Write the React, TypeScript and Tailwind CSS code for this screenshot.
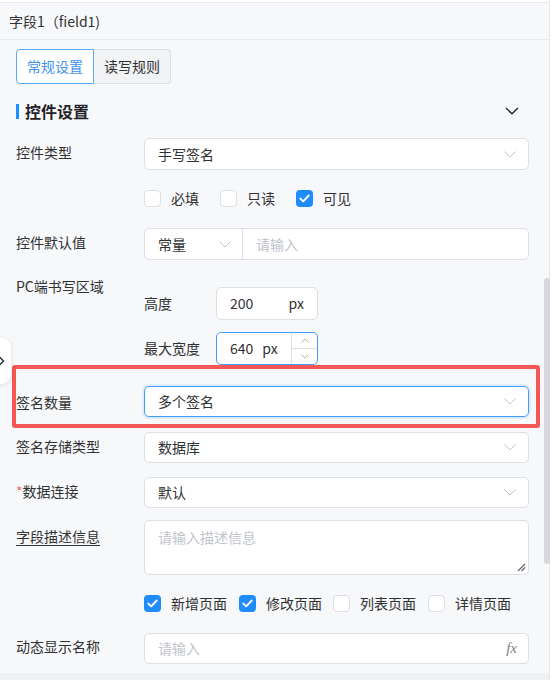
import React from "react";

const font = "font-['Noto_Sans_CJK_SC','Noto_Sans',sans-serif]";

function Chevron({ className = "" }: { className?: string }) {
  return (
    <svg width="12" height="7" viewBox="0 0 12 7" fill="none" className={className}>
      <path d="M0.5 0.5L6 6L11.5 0.5" stroke="currentColor" strokeWidth="1" />
    </svg>
  );
}

function Select({ value, focused = false, tall = false }: { value: string; focused?: boolean; tall?: boolean }) {
  const base =
    "flex w-[385px] items-center justify-between rounded-[5px] border bg-white pl-[13px] pr-[12px] text-[14px] text-[#303133]";
  return (
    <div
      className={`${base} ${tall ? "h-[32px]" : "h-[31px]"} ${
        focused ? "border-[#409eff] shadow-[0_0_0_2px_rgba(64,158,255,0.12)]" : "border-[#dcdfe6]"
      }`}
    >
      <span>{value}</span>
      <Chevron className="text-[#c0c4cc]" />
    </div>
  );
}

function Box({ checked, label, className = "" }: { checked: boolean; label: string; className?: string }) {
  return (
    <div className={`flex items-center ${className}`}>
      {checked ? (
        <span className="flex h-[17px] w-[17px] items-center justify-center rounded-[4px] bg-[#1e8cfa]">
          <svg width="11" height="9" viewBox="0 0 11 9" fill="none">
            <path d="M1.3 4.6L4.2 7.3L9.7 1.5" stroke="white" strokeWidth="1.9" strokeLinecap="round" strokeLinejoin="round" />
          </svg>
        </span>
      ) : (
        <span className="h-[17px] w-[17px] rounded-[4px] border border-[#dcdfe6] bg-white" />
      )}
      <span className="ml-[10px] text-[14px] leading-[22px] text-[#303133]">{label}</span>
    </div>
  );
}

function Label({ children, className = "" }: { children: React.ReactNode; className?: string }) {
  return <div className={`w-[128px] shrink-0 text-[14px] leading-[22px] text-[#303133] ${className}`}>{children}</div>;
}

export default function App() {
  return (
    <div className={`relative h-[680px] w-[554px] overflow-hidden bg-white ${font}`}>
      <div className="w-[550px] border-r border-[#e6e8eb] bg-[#f7f8fa]">
        <div className="h-[2px] bg-white" />
        {/* panel title */}
        <div className="flex h-[38px] items-center border-y border-[#e8eaee] pl-[9px] text-[14px] text-[#303133]">
          字段1（field1)
        </div>

        <div className="flex flex-col pb-[9px] pl-4">
          {/* tabs */}
          <div className="mt-[9px] flex h-[35px] text-[14px]">
            <div className="flex w-[78px] items-center justify-center rounded-l-[4px] border border-[#5aa8fa] bg-white text-[#3f92ee]">
              常规设置
            </div>
            <div className="flex w-[77px] items-center justify-center rounded-r-[4px] border border-l-0 border-[#dcdfe6] bg-[#f2f3f5] text-[#303133]">
              读写规则
            </div>
          </div>

          {/* section heading */}
          <div className="mt-[16px] flex h-[22px] items-center pr-[30px]">
            <span className="h-[15px] w-[3px] bg-[#1890ff]" />
            <span className="ml-[6px] text-[16px] font-bold text-[#1f2329]">控件设置</span>
            <svg width="14" height="8" viewBox="0 0 14 8" fill="none" className="ml-auto text-[#1f2329]">
              <path d="M1 1L7 6.8L13 1" stroke="currentColor" strokeWidth="1.4" />
            </svg>
          </div>

          {/* control type */}
          <div className="mt-[16px] flex">
            <Label className="pt-[3px]">控件类型</Label>
            <Select value="手写签名" tall />
          </div>

          <div className="mt-[17px] flex pl-[128px]">
            <Box checked={false} label="必填" />
            <Box checked={false} label="只读" className="ml-[21px]" />
            <Box checked label="可见" className="ml-[21px]" />
          </div>

          {/* default value */}
          <div className="mt-[19px] flex">
            <Label className="pt-[3px]">控件默认值</Label>
            <div className="flex h-[32px] w-[385px] rounded-[5px] border border-[#dcdfe6] bg-white text-[14px]">
              <div className="flex w-[98px] items-center justify-between border-r border-[#dcdfe6] pl-[13px] pr-[11px] text-[#303133]">
                <span>常量</span>
                <Chevron className="text-[#c0c4cc]" />
              </div>
              <div className="flex items-center pl-[13px] text-[#c0c4cc]">请输入</div>
            </div>
          </div>

          {/* PC writing area */}
          <div className="mt-[15px] flex">
            <Label>PC端书写区域</Label>
            <div className="mt-[12px] flex flex-col gap-[12px]">
              <div className="flex items-center">
                <span className="w-[72px] text-[14px] text-[#303133]">高度</span>
                <div className="flex h-[33px] w-[102px] items-center justify-between rounded-[5px] border border-[#dcdfe6] bg-white pl-[13px] pr-[13px] text-[14px] text-[#303133]">
                  <span>200</span>
                  <span>px</span>
                </div>
              </div>
              <div className="flex items-center">
                <span className="w-[72px] text-[14px] text-[#303133]">最大宽度</span>
                <div className="flex h-[33px] w-[102px] items-center rounded-[5px] border border-[#409eff] bg-white pl-[13px] text-[14px] text-[#303133]">
                  <span>640</span>
                  <span className="ml-[9px]">px</span>
                  <div className="ml-auto flex h-full w-[26px] flex-col border-l border-[#dcdfe6]">
                    <div className="flex flex-1 items-center justify-center border-b border-[#dcdfe6]">
                      <svg width="8" height="5" viewBox="0 0 8 5" fill="none">
                        <path d="M0.5 4.5L4 1L7.5 4.5" stroke="#b0b4bb" strokeWidth="1" />
                      </svg>
                    </div>
                    <div className="flex flex-1 items-center justify-center">
                      <svg width="8" height="5" viewBox="0 0 8 5" fill="none">
                        <path d="M0.5 0.5L4 4L7.5 0.5" stroke="#b0b4bb" strokeWidth="1" />
                      </svg>
                    </div>
                  </div>
                </div>
              </div>
            </div>
          </div>

          {/* signature count, marked */}
          <div className="ml-[-4px] flex w-[528px] rounded-[3px] border-4 border-[#f55656] pb-[7px] pt-[17px]">
            <Label className="pt-[5px]">签名数量</Label>
            <Select value="多个签名" focused />
          </div>

          <div className="mt-[4px] flex">
            <Label className="pt-[3px]">签名存储类型</Label>
            <Select value="数据库" />
          </div>

          <div className="mt-[14px] flex">
            <Label className="pt-[3px]">
              <span className="text-[#f56c6c]">*</span>数据连接
            </Label>
            <Select value="默认" />
          </div>

          {/* description */}
          <div className="mt-[12px] flex">
            <Label className="pt-[5px]">
              <span className="underline underline-offset-[3px]">字段描述信息</span>
            </Label>
            <div className="relative h-[55px] w-[385px] rounded-[5px] border border-[#dcdfe6] bg-white pl-[13px] pt-[5px] text-[14px] leading-[22px] text-[#c0c4cc]">
              请输入描述信息
              <svg width="10" height="10" viewBox="0 0 10 10" className="absolute bottom-[2px] right-[2px]" fill="none">
                <path d="M9 2L2 9M9 5.5L5.5 9" stroke="#5f6368" strokeWidth="1.2" />
              </svg>
            </div>
          </div>

          <div className="mt-[17px] flex pl-[128px]">
            <Box checked label="新增页面" />
            <Box checked label="修改页面" className="ml-[12px]" />
            <Box checked={false} label="列表页面" className="ml-[11px]" />
            <Box checked={false} label="详情页面" className="ml-[12px]" />
          </div>

          {/* dynamic display name */}
          <div className="mt-[19px] flex">
            <Label className="pt-[2px]">动态显示名称</Label>
            <div className="flex h-[31px] w-[385px] items-center justify-between rounded-[5px] border border-[#dcdfe6] bg-white pl-[13px] pr-[11px] text-[14px]">
              <span className="text-[#c0c4cc]">请输入</span>
              <span className="font-['Liberation_Serif',serif] text-[15px] italic text-[#7d828a]">fx</span>
            </div>
          </div>
        </div>
        <div className="h-[20px] bg-[#eff0f2]" />
      </div>

      {/* scrollbar thumb */}
      <div className="absolute left-[544px] top-[278px] h-[286px] w-[6px] rounded-full bg-[#d6d8dd]" />

      {/* side collapse handle */}
      <div className="absolute left-[-22px] top-[338px] flex h-[46px] w-[33px] items-center justify-end rounded-[9px] bg-white pr-[6px] shadow-[0_1px_4px_rgba(0,0,0,0.12)]">
        <svg width="7" height="10" viewBox="0 0 7 10" fill="none">
          <path d="M1.5 1L5.5 5L1.5 9" stroke="#2a3140" strokeWidth="1.5" />
        </svg>
      </div>
    </div>
  );
}
